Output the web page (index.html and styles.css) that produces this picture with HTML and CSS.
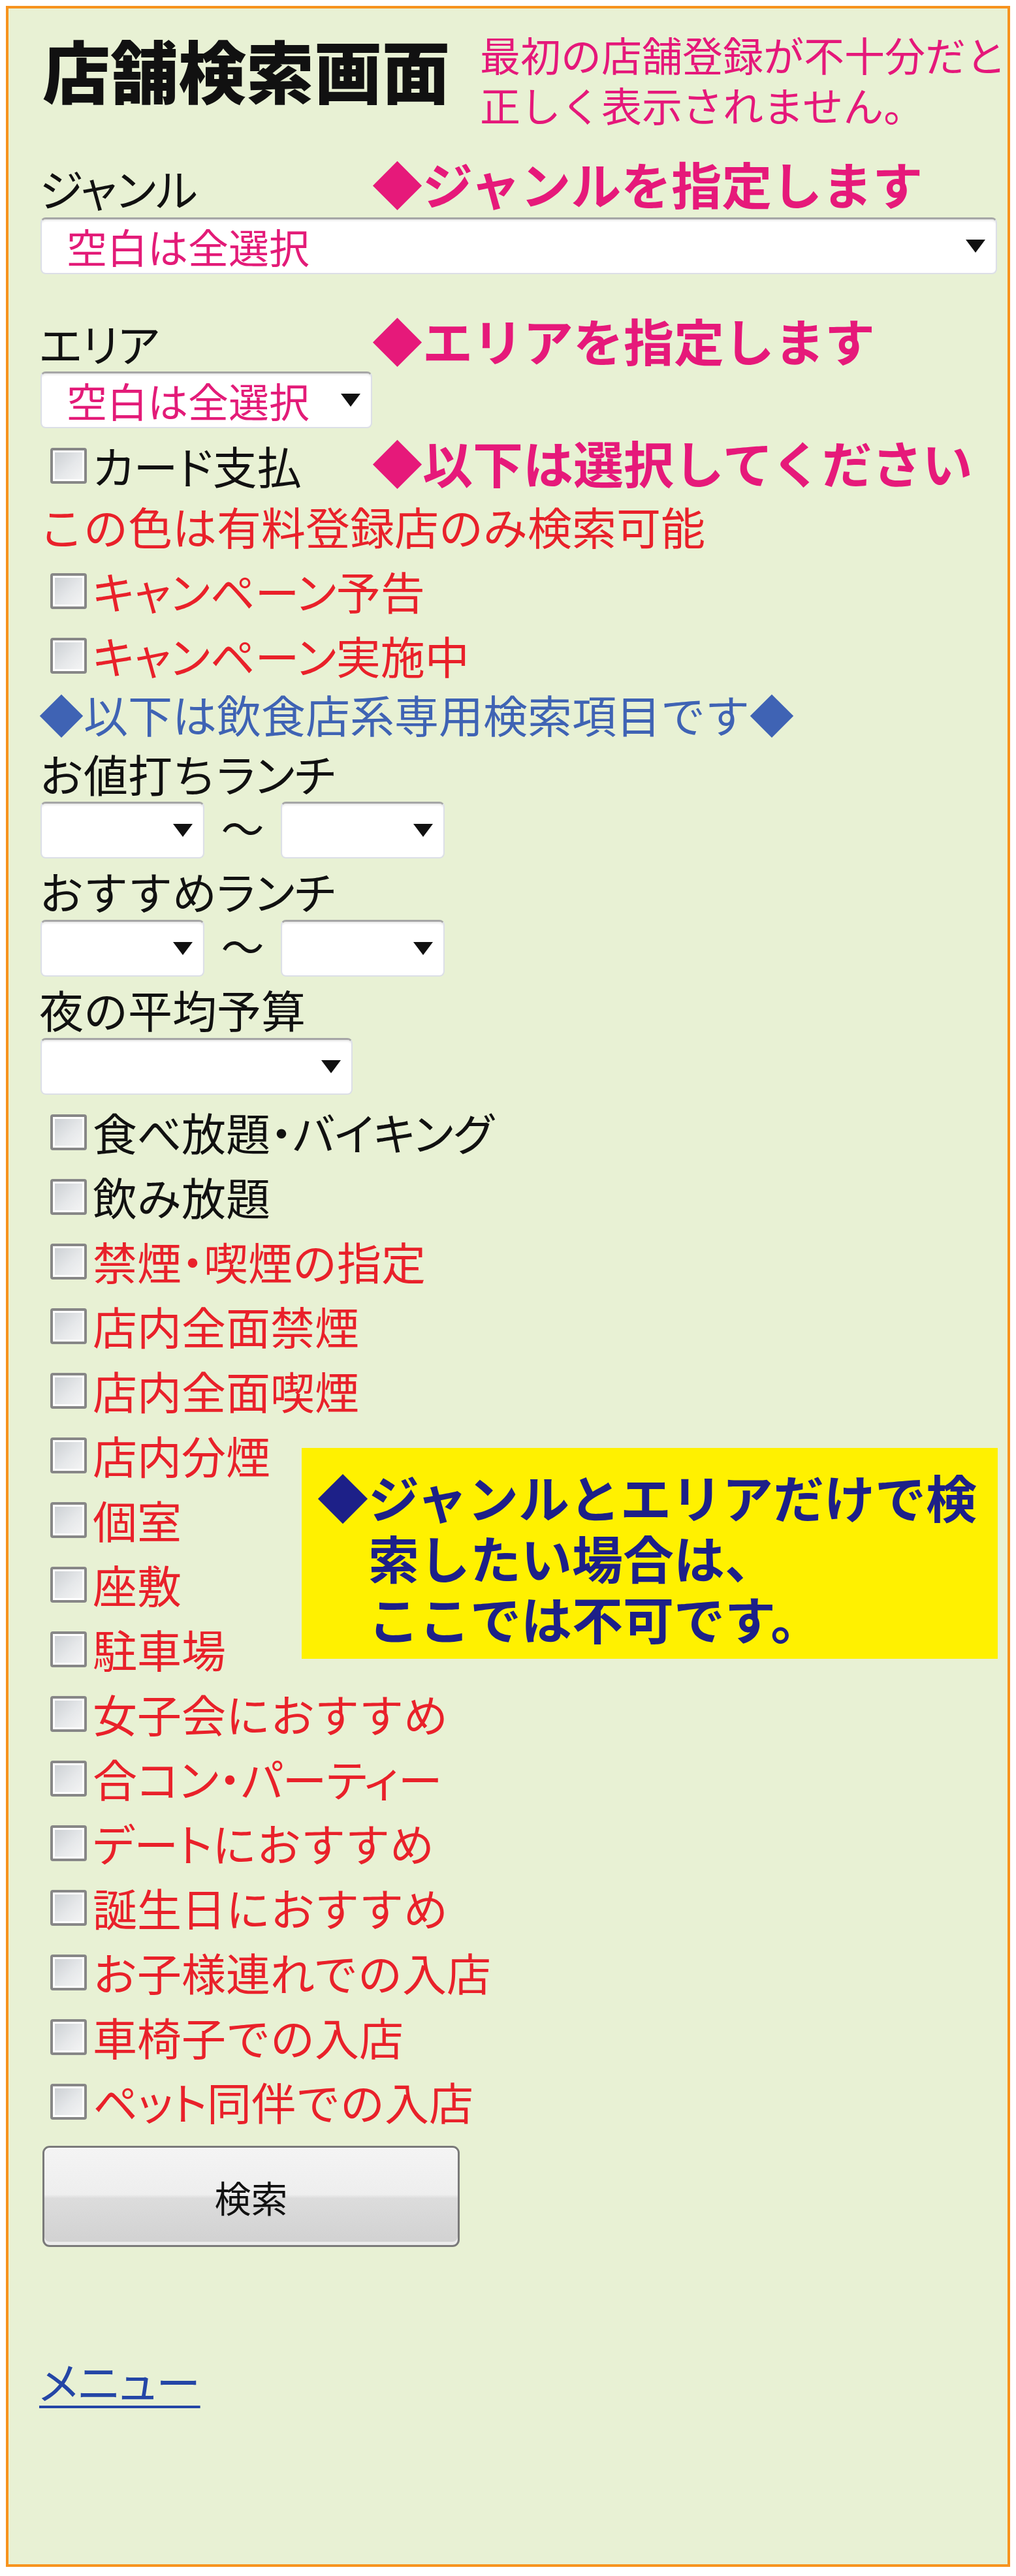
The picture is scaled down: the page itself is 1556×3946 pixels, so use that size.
FILE: index.html
```html
<!DOCTYPE html>
<html lang="ja">
<head>
<meta charset="utf-8">
<title>店舗検索画面</title>
<link rel="stylesheet" href="styles.css">
</head>
<body>
<div class="page">
  <div class="header">
    <h1 class="title">店舗検索画面</h1>
    <p class="note">最初の店舗登録が不十分だと<br>正しく表示されません。</p>
  </div>

  <div class="field-row row-genre">
    <span class="label"><span class="kana">ジャンル</span></span>
    <span class="hint">◆ジャンルを指定します</span>
  </div>
  <div class="select select-genre"><span class="select-text">空白は全選択</span><span class="arrow"></span></div>

  <div class="field-row row-area">
    <span class="label"><span class="kana">エリア</span></span>
    <span class="hint">◆エリアを指定します</span>
  </div>
  <div class="select select-area"><span class="select-text">空白は全選択</span><span class="arrow"></span></div>

  <div class="field-row row-card">
    <label class="chk"><span class="box"></span><span><span class="kana">カード</span>支払</span></label>
    <span class="hint">◆以下は選択してください</span>
  </div>

  <p class="line red-note">この色は有料登録店のみ検索可能</p>

  <div class="chk-group chk-group-paid">
    <label class="chk red"><span class="box"></span><span><span class="kana">キャンペーン</span>予告</span></label>
    <label class="chk red"><span class="box"></span><span><span class="kana">キャンペーン</span>実施中</span></label>
  </div>

  <p class="line blue-note">◆以下は飲食店系専用検索項目です◆</p>

  <p class="line label-lunch">お値打ち<span class="kana">ランチ</span></p>
  <div class="range range-lunch">
    <div class="select select-small"><span class="select-text"></span><span class="arrow"></span></div>
    <span class="tilde">〜</span>
    <div class="select select-small"><span class="select-text"></span><span class="arrow"></span></div>
  </div>

  <p class="line label-next">おすすめ<span class="kana">ランチ</span></p>
  <div class="range range-next">
    <div class="select select-small"><span class="select-text"></span><span class="arrow"></span></div>
    <span class="tilde">〜</span>
    <div class="select select-small"><span class="select-text"></span><span class="arrow"></span></div>
  </div>

  <p class="line label-next">夜の平均予算</p>
  <div class="select select-budget"><span class="select-text"></span><span class="arrow"></span></div>

  <div class="chk-group chk-group-food">
    <label class="chk"><span class="box"></span><span>食べ放題<span class="kana">・バイキング</span></span></label>
    <label class="chk"><span class="box"></span><span>飲み放題</span></label>
    <label class="chk red"><span class="box"></span><span>禁煙<span class="kana">・</span>喫煙の指定</span></label>
    <label class="chk red"><span class="box"></span><span>店内全面禁煙</span></label>
    <label class="chk red"><span class="box"></span><span>店内全面喫煙</span></label>
    <label class="chk red"><span class="box"></span><span>店内分煙</span></label>
    <label class="chk red"><span class="box"></span><span>個室</span></label>
    <label class="chk red"><span class="box"></span><span>座敷</span></label>
    <label class="chk red"><span class="box"></span><span>駐車場</span></label>
    <label class="chk red"><span class="box"></span><span>女子会におすすめ</span></label>
    <label class="chk red"><span class="box"></span><span>合<span class="kana">コン・パーティー</span></span></label>
    <label class="chk red"><span class="box"></span><span><span class="kana">デート</span>におすすめ</span></label>
    <label class="chk red"><span class="box"></span><span>誕生日におすすめ</span></label>
    <label class="chk red"><span class="box"></span><span>お子様連れでの入店</span></label>
    <label class="chk red"><span class="box"></span><span>車椅子での入店</span></label>
    <label class="chk red"><span class="box"></span><span><span class="kana">ペット</span>同伴での入店</span></label>
  </div>

  <button class="search-btn" type="button">検索</button>

  <p class="line menu-row"><a href="#" class="menu"><span class="kana">メニュー</span></a></p>

  <div class="callout">◆ジャンルとエリアだけで検<br>索したい場合は、<br>ここでは不可です。</div>
</div>
</body>
</html>
```

FILE: styles.css
```css
html, body {
  margin: 0;
  padding: 0;
  background: #ffffff;
}

body {
  font-family: "Noto Sans CJK JP", "Noto Sans", sans-serif;
  color: #111111;
}

.page {
  position: relative;
  margin: 9px;
  width: 1538px;
  height: 3923px;
  box-sizing: border-box;
  border: 4px solid #f7931e;
  background: #e8f1d4;
  padding-left: 47px;
  overflow: hidden;
}

/* proportional katakana, like the phone's UI font */
.kana {
  font-feature-settings: "palt" 1;
}

/* header */
.header {
  display: flex;
  align-items: flex-start;
  margin-top: 32px;
  height: 154px;
}

.title {
  margin: 0 0 0 5px;
  font-size: 104px;
  line-height: 122px;
  font-weight: 900;
  color: #111111;
  white-space: nowrap;
}

.note {
  margin: 0 0 0 46px;
  font-size: 62px;
  line-height: 77px;
  color: #e5187a;
  white-space: nowrap;
}

/* label + hint rows */
.field-row {
  display: grid;
  grid-template-columns: 510px auto;
  align-items: start;
}

.row-genre { margin-top: 42px; }
.row-area { margin-top: 61px; }
.row-card { margin-top: 7.5px; }

.label {
  font-size: 68px;
  line-height: 80px;
  color: #111111;
  white-space: nowrap;
}

.row-genre .label { margin-top: 7px; }
.row-area .label { margin-top: 5px; }

.hint {
  font-size: 77px;
  line-height: 80px;
  font-weight: 700;
  color: #e6197a;
  white-space: nowrap;
}

.row-card .hint { margin-top: 4.5px; }

/* select look-alikes */
.select {
  display: flex;
  align-items: center;
  justify-content: space-between;
  box-sizing: border-box;
  height: 87px;
  margin-left: 2px;
  background: #ffffff;
  border: 2px solid #dcdfe7;
  border-top: 3px solid #a6a6a6;
  border-radius: 8px;
  box-shadow: inset 0 3px 3px -1px rgba(0, 0, 0, 0.10);
  padding: 0 16px 0 38px;
}

.select-text {
  font-size: 62px;
  line-height: 82px;
  color: #e31b78;
  white-space: nowrap;
}

.arrow {
  flex: none;
  width: 0;
  height: 0;
  border-left: 15px solid transparent;
  border-right: 15px solid transparent;
  border-top: 20px solid #111111;
}

.select-genre { width: 1465px; margin-top: 5px; }
.select-area { width: 508px; margin-top: 3px; }
.select-small { width: 251px; margin-left: 0; }
.select-budget { width: 478px; margin-top: 4px; }

.range {
  display: flex;
  align-items: center;
  margin-left: 2px;
}

.range-lunch { margin-top: 3px; }
.range-next { margin-top: 4px; }

.tilde {
  width: 117px;
  text-align: center;
  font-size: 66px;
  line-height: 60px;
  color: #111111;
  padding-bottom: 12px;
}

/* text lines */
.line {
  margin: 0;
  font-size: 68px;
  line-height: 80px;
  white-space: nowrap;
}

.red-note { margin-top: 3px; color: #e9212a; }
.blue-note { color: #3f63b4; }
.label-lunch { margin-top: 11.5px; }
.label-next { margin-top: 10px; }

/* checkboxes */
.chk-group-paid { margin-top: 10px; }
.chk-group-food { margin-top: 7.5px; }

.chk {
  display: flex;
  align-items: center;
  width: fit-content;
  height: 99px;
  font-size: 68px;
  line-height: 80px;
  color: #111111;
  white-space: nowrap;
}

.chk.red { color: #e9212a; }

.box {
  flex: none;
  width: 56px;
  height: 55px;
  box-sizing: border-box;
  margin-left: 17px;
  margin-right: 9px;
  border: 4px solid #878787;
  border-radius: 4px;
  background: linear-gradient(135deg, #c9cdd1 0%, #e6e8ea 55%, #f6f6f6 100%);
  box-shadow: inset 0 0 0 3px #ffffff;
}

/* button */
.search-btn {
  display: block;
  margin: 18.5px 0 0 5px;
  width: 639px;
  height: 155px;
  box-sizing: border-box;
  border: 3px solid #7a7a7a;
  border-radius: 11px;
  background: linear-gradient(#f4f4f4 0%, #eeeeee 48%, #dcdcdc 52%, #d1d1d1 100%);
  box-shadow: inset 0 2px 0 #ffffff, inset 0 -5px 0 #ececec;
  font-family: "Noto Sans CJK JP", sans-serif;
  font-size: 56px;
  line-height: 60px;
  color: #111111;
  padding: 0;
}

/* menu link */
.menu-row { margin-top: 164.5px; }

.menu {
  font-size: 68px;
  color: #2446a6;
  text-decoration: underline;
  text-decoration-thickness: 4px;
  text-underline-offset: 9px;
}

/* yellow annotation over the list */
.callout {
  position: absolute;
  left: 449px;
  top: 2205px;
  width: 1066px;
  height: 323px;
  box-sizing: border-box;
  padding: 28px 0 0 102px;
  text-indent: -78px;
  background: #fff100;
  color: #1d2088;
  font-size: 78px;
  line-height: 93px;
  font-weight: 700;
  white-space: nowrap;
}
```
